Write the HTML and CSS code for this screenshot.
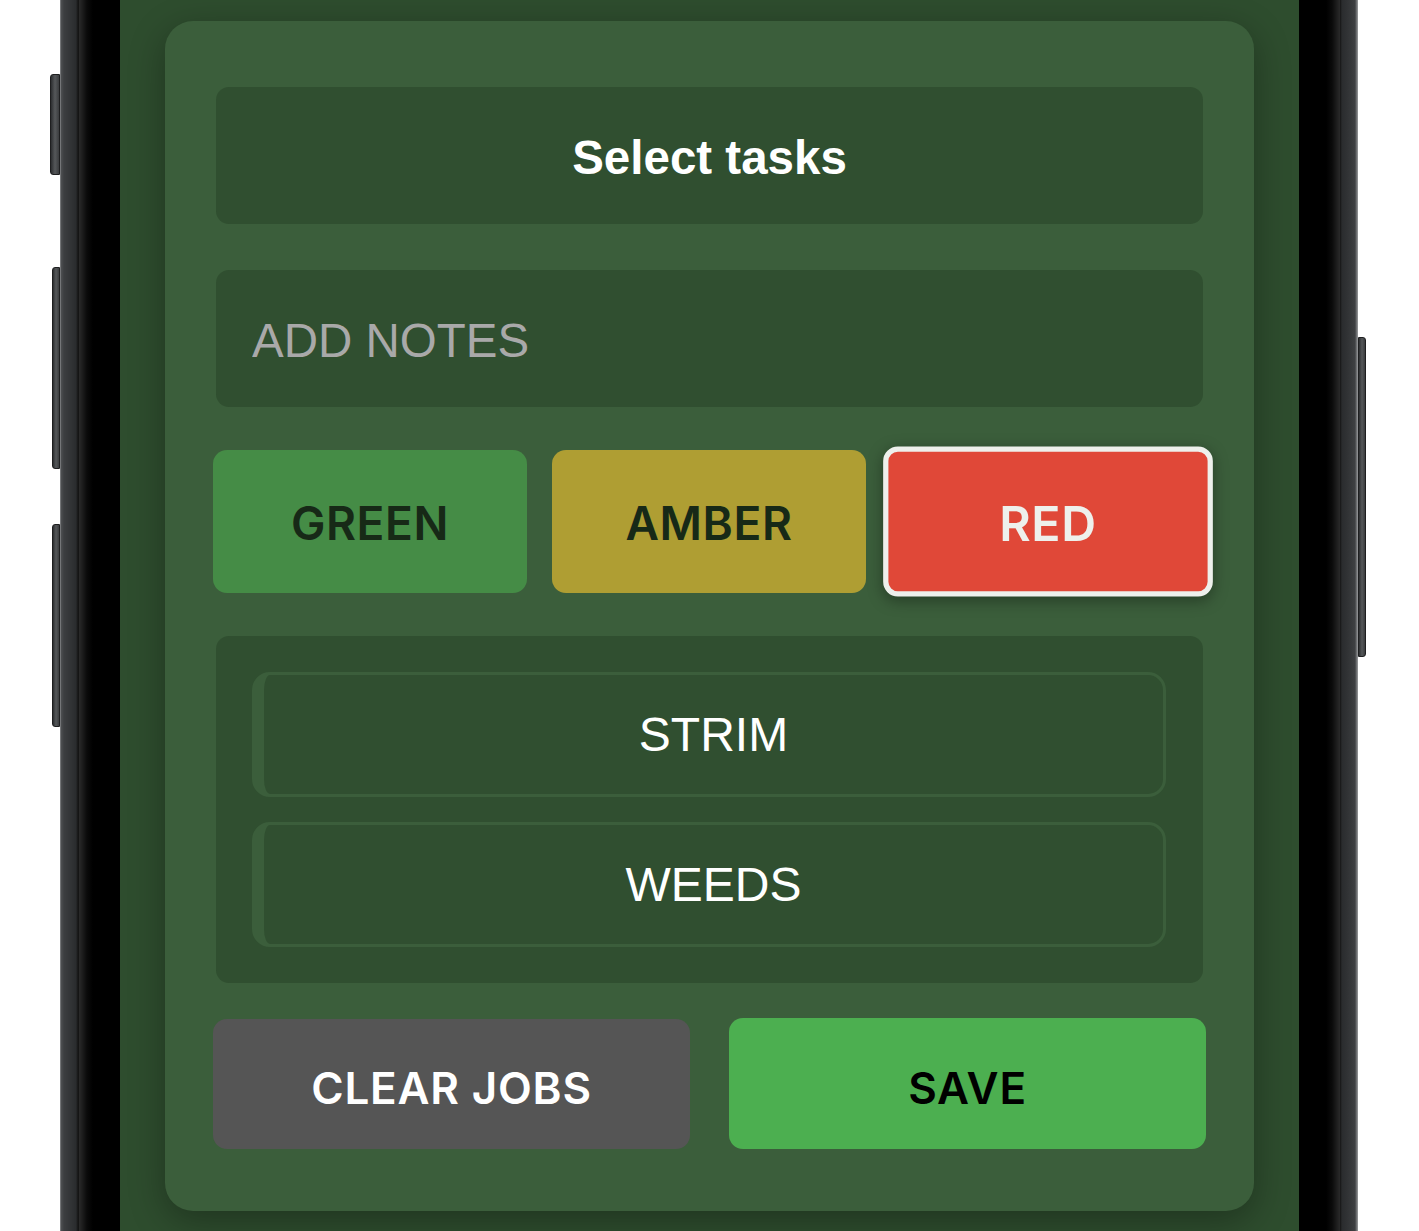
FILE: index.html
```html
<!DOCTYPE html>
<html lang="en">
<head>
<meta charset="utf-8">
<title>Select tasks</title>
<link rel="stylesheet" href="styles.css">
</head>
<body>
<div class="phone">
  <span class="side-btn side-btn--action"></span>
  <span class="side-btn side-btn--vol-up"></span>
  <span class="side-btn side-btn--vol-down"></span>
  <span class="side-btn side-btn--power"></span>
  <div class="bezel">
    <div class="screen">
      <div class="card">
        <div class="title-box">Select tasks</div>
        <input class="notes" type="text" placeholder="ADD NOTES">
        <div class="rag-row">
          <button class="rag rag--green">GREEN</button>
          <button class="rag rag--amber">AMBER</button>
          <button class="rag rag--red is-selected">RED</button>
        </div>
        <div class="task-panel">
          <div class="task">STRIM</div>
          <div class="task">WEEDS</div>
        </div>
        <div class="action-row">
          <button class="action action--clear">CLEAR JOBS</button>
          <button class="action action--save">SAVE</button>
        </div>
      </div>
    </div>
  </div>
</div>
</body>
</html>
```

FILE: styles.css
```css
* { box-sizing: border-box; }

html, body {
  margin: 0;
  padding: 0;
  background: #ffffff;
  width: 1419px;
  height: 1231px;
  overflow: hidden;
}

body {
  padding-left: 60px;
  font-family: "Liberation Sans", Arial, sans-serif;
}

.phone {
  position: relative;
  width: 1298px;
  height: 1231px;
  padding: 0 18px 0 19px;
  background:
    linear-gradient(to right,
      #9a9c9e 0, #4e5052 1px, #3c3e40 4px, #333537 10px, #2a2c2e 16px, #151515 18px, #151515 19px,
      transparent 19px, transparent calc(100% - 18px),
      #151515 calc(100% - 18px), #2a2c2e calc(100% - 16px), #333537 calc(100% - 9px), #3e4042 calc(100% - 3px), #9a9c9e 100%);
}

.side-btn {
  position: absolute;
  width: 10px;
  background: linear-gradient(to right, #2c2e30, #55585a 50%, #3a3c3e);
  border: 1px solid #1e1f20;
}

.side-btn--action { left: -10px; top: 74px; height: 101px; border-radius: 3px 0 0 3px; }
.side-btn--vol-up { left: -8px; width: 8px; top: 267px; height: 202px; border-radius: 3px 0 0 3px; }
.side-btn--vol-down { left: -8px; width: 8px; top: 524px; height: 203px; border-radius: 3px 0 0 3px; }
.side-btn--power { right: -8px; width: 8px; top: 337px; height: 320px; border-radius: 0 3px 3px 0; }

.bezel {
  height: 100%;
  padding: 0 41px;
  background: linear-gradient(to right,
    #2a2a2a 0, #0a0a0a 8px, #000 14px, #000 calc(100% - 14px), #0a0a0a calc(100% - 8px), #2a2a2a 100%);
}

.screen {
  height: 100%;
  background: #2e4d2e;
  padding: 21px 45px 0 45px;
  overflow: hidden;
}

.card {
  width: 1089px;
  height: 1190px;
  background: #3b5e3b;
  border-radius: 28px;
  padding: 66px 51px 0 51px;
  box-shadow: 0 10px 36px rgba(0, 0, 0, 0.32);
  display: flex;
  flex-direction: column;
}

.title-box {
  height: 137px;
  background: #304f30;
  border-radius: 13px;
  display: flex;
  align-items: center;
  justify-content: center;
  padding-top: 3px;
  color: #ffffff;
  font-weight: 700;
  font-size: 47.5px;
}

.notes {
  display: block;
  width: 100%;
  height: 137px;
  margin-top: 46px;
  border: 0;
  outline: none;
  border-radius: 13px;
  background: #304f30;
  padding: 3px 36px 0 36px;
  font-family: "Liberation Sans", Arial, sans-serif;
  font-size: 47.5px;
  color: #ffffff;
}

.notes::placeholder {
  color: #a9a9a9;
  opacity: 1;
}

.rag-row {
  margin: 43px -2px 0 -3px;
  height: 143px;
  display: grid;
  grid-template-columns: repeat(3, 1fr);
  gap: 25px;
}

.rag,
.action {
  border: 0;
  border-radius: 14px;
  font-family: Inter, "Noto Sans", sans-serif;
  font-weight: 600;
  cursor: pointer;
  padding: 0;
}

.rag {
  font-size: 46px;
  letter-spacing: 0.6px;
  color: #172917;
  padding-top: 2px;
}

.rag--green { background: #458c46; }
.rag--amber { background: #af9e33; }
.rag--red { background: #e04838; color: #eef0ec; }

.rag.is-selected {
  border: 5px solid #eef0ec;
  transform: scale(1.05);
  box-shadow: 0 4px 14px rgba(0, 0, 0, 0.35);
}

.task-panel {
  margin-top: 43px;
  background: #304f30;
  border-radius: 13px;
  padding: 36px 37px 36px 36px;
  display: flex;
  flex-direction: column;
  gap: 25px;
}

.task {
  height: 125px;
  border: 3px solid #3b5e3b;
  border-left-width: 12px;
  border-radius: 18px;
  display: flex;
  align-items: center;
  justify-content: center;
  color: #ffffff;
  font-size: 48px;
}

.action-row {
  margin: 35px -3px 0 -3px;
  display: grid;
  grid-template-columns: 1fr 1fr;
  gap: 39px;
}

.action {
  height: 131px;
  font-size: 44px;
  letter-spacing: 0.8px;
  padding-top: 8px;
}

.action--clear { background: #555555; color: #ffffff; height: 130px; margin-top: 1px; }
.action--save { background: #4caf50; color: #000000; }
```
